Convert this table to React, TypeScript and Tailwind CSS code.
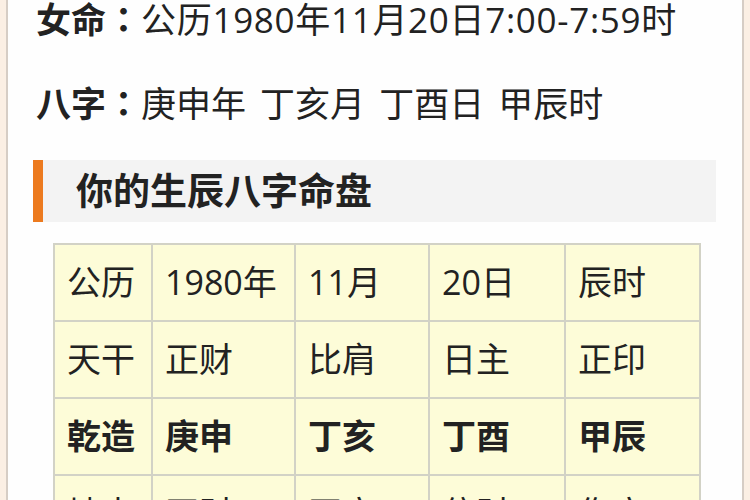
import React from 'react';

const font = { fontFamily: '"Open Sans", "Noto Sans CJK SC", sans-serif' };
const colon = { fontFamily: '"Noto Sans CJK JP", sans-serif' };

const rows = [
  { bold: false, cells: ['公历', '1980年', '11月', '20日', '辰时'] },
  { bold: false, cells: ['天干', '正财', '比肩', '日主', '正印'] },
  { bold: true, cells: ['乾造', '庚申', '丁亥', '丁酉', '甲辰'] },
  { bold: false, cells: ['地支', '正财', '正官', '偏财', '伤官'] }
];

const App = () => {
  return (
    <div className="flex h-[500px] w-[750px] overflow-hidden bg-[#fbefe4]" style={font}>
      <div className="ml-[6px] w-[738px] shrink-0 border-x-2 border-[#d6cdc5] bg-[#fefefe] text-[#222]">
        {/* Info lines */}
        <div className="-mt-[2px] pl-[28px] text-[35px] leading-[40px]">
          <p className="h-[40px] whitespace-nowrap">
            <span className="font-bold">女命</span>
            <span className="font-bold" style={colon}>：</span>
            <span className="tracking-[0.7px]">公历1980年11月20日7:00-7:59时</span>
          </p>
          <p className="mt-[44px] h-[40px] whitespace-nowrap [word-spacing:5px]">
            <span className="font-bold">八字</span>
            <span className="font-bold" style={colon}>：</span>庚申年 丁亥月 丁酉日 甲辰时
          </p>
        </div>

        {/* Section title */}
        <div className="ml-[25px] mt-[38px] flex h-[62px] w-[683px]">
          <div className="w-[10px] bg-[#ec7a1f]"></div>
          <div className="flex flex-1 items-center bg-[#f3f3f3] pl-[33px] text-[37px] font-bold">
            你的生辰八字命盘
          </div>
        </div>

        {/* Bazi table */}
        <div className="ml-[45px] mt-[21px] grid w-[648px] grid-cols-[96px_141px_132px_134px_133px] gap-[2px] bg-[#d2d2c6] p-[2px]">
          {rows.map((row, r) =>
            row.cells.map((cell, c) => (
              <div
                key={`${r}-${c}`}
                className={`flex h-[75px] items-center bg-[#fdfcd8] pl-[12px] text-[34px] ${row.bold ? 'font-bold' : ''}`}
              >
                {cell}
              </div>
            ))
          )}
        </div>
      </div>
    </div>
  );
};

export default App;
